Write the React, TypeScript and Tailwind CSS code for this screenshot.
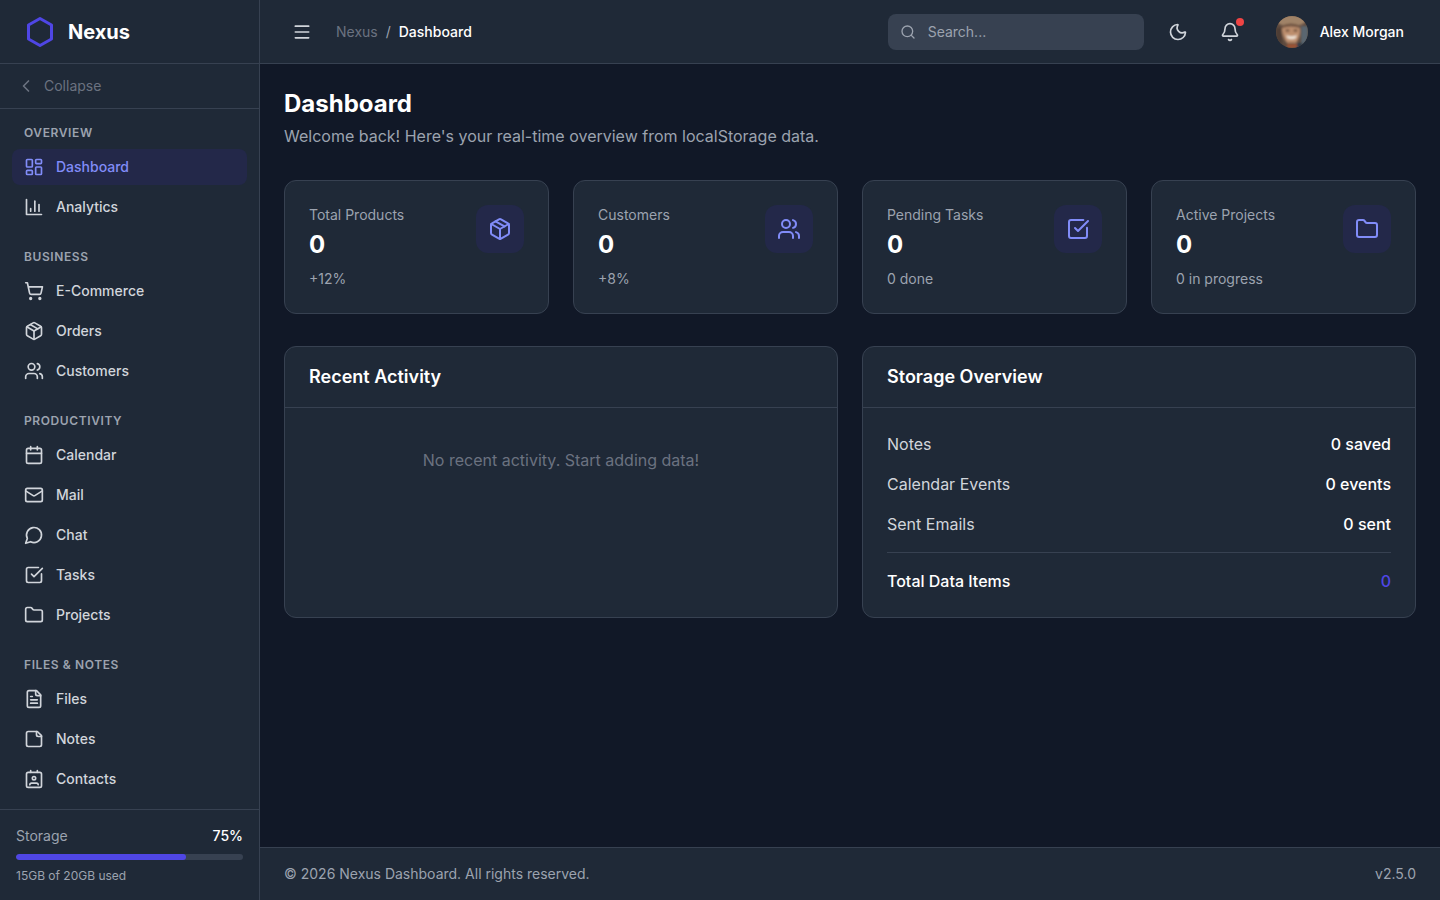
import React from "react";
import {
  ChevronLeft, LayoutDashboard, ShoppingCart, Package, Users, Calendar, Mail,
  SquareCheckBig, Folder, Menu, Search, Moon, Bell,
} from "lucide-react";

type IconP = { size?: number; className?: string };
type IconT = React.ComponentType<IconP>;

function Svg({ size = 20, className = "", children }: IconP & { children: React.ReactNode }) {
  return (
    <svg width={size} height={size} viewBox="0 0 24 24" fill="none" stroke="currentColor" strokeWidth={2} strokeLinecap="round" strokeLinejoin="round" className={className}>
      {children}
    </svg>
  );
}

const AnalyticsIcon: IconT = (p) => (
  <Svg {...p}>
    <path d="M3 3v18h18" />
    <path d="M18 17V9" />
    <path d="M13 17V5" />
    <path d="M8 17v-3" />
  </Svg>
);
const ChatIcon: IconT = (p) => (
  <Svg {...p}>
    <path d="M7.9 20A9 9 0 1 0 4 16.1L2 22Z" />
  </Svg>
);
const FileTextIcon: IconT = (p) => (
  <Svg {...p}>
    <path d="M15 2H6a2 2 0 0 0-2 2v16a2 2 0 0 0 2 2h12a2 2 0 0 0 2-2V7Z" />
    <path d="M14 2v4a2 2 0 0 0 2 2h4" />
    <path d="M10 9H8" />
    <path d="M16 13H8" />
    <path d="M16 17H8" />
  </Svg>
);
const NoteIcon: IconT = (p) => (
  <Svg {...p}>
    <path d="M16 3H5a2 2 0 0 0-2 2v14a2 2 0 0 0 2 2h14a2 2 0 0 0 2-2V8Z" />
    <path d="M15 3v4a2 2 0 0 0 2 2h4" />
  </Svg>
);
const ContactIcon: IconT = (p) => (
  <Svg {...p}>
    <path d="M16 2v2" />
    <path d="M8 2v2" />
    <rect x="3" y="4" width="18" height="18" rx="2" />
    <circle cx="12" cy="11" r="2" />
    <path d="M17 19a2 2 0 0 0-2-2H9a2 2 0 0 0-2 2" />
  </Svg>
);

const sections: { title: string; items: { label: string; icon: IconT; active?: boolean }[] }[] = [
  { title: "Overview", items: [{ label: "Dashboard", icon: LayoutDashboard, active: true }, { label: "Analytics", icon: AnalyticsIcon }] },
  { title: "Business", items: [{ label: "E-Commerce", icon: ShoppingCart }, { label: "Orders", icon: Package }, { label: "Customers", icon: Users }] },
  { title: "Productivity", items: [{ label: "Calendar", icon: Calendar }, { label: "Mail", icon: Mail }, { label: "Chat", icon: ChatIcon }, { label: "Tasks", icon: SquareCheckBig }, { label: "Projects", icon: Folder }] },
  { title: "Files & Notes", items: [{ label: "Files", icon: FileTextIcon }, { label: "Notes", icon: NoteIcon }, { label: "Contacts", icon: ContactIcon }] },
];

const stats: { label: string; sub: string; icon: IconT }[] = [
  { label: "Total Products", sub: "+12%", icon: Package },
  { label: "Customers", sub: "+8%", icon: Users },
  { label: "Pending Tasks", sub: "0 done", icon: SquareCheckBig },
  { label: "Active Projects", sub: "0 in progress", icon: Folder },
];

function Logo() {
  return (
    <svg width="32" height="32" viewBox="0 0 32 32" fill="none" className="shrink-0">
      <path d="M16 2.5 27.5 9v14L16 29.5 4.500 23V9z" stroke="#4f46e5" strokeWidth="3" strokeLinejoin="round" />
    </svg>
  );
}

function Avatar() {
  return (
    <svg width="32" height="32" viewBox="0 0 32 32" className="shrink-0 rounded-full">
      <defs>
        <filter id="soft" x="-10%" y="-10%" width="120%" height="120%">
          <feGaussianBlur stdDeviation="0.8" />
        </filter>
      </defs>
      <rect width="32" height="32" fill="#5e4a3e" />
      <g filter="url(#soft)">
        <rect x="25" y="10" width="7" height="22" fill="#5a6670" />
        <rect x="0" y="12" width="6" height="20" fill="#4d3c34" />
        <ellipse cx="15" cy="4.500" rx="15" ry="5.500" fill="#a08367" />
        <path d="M5 10q10-5 20 0l-1 2q-9-3-18 0z" fill="#6e5140" />
        <path d="M6 12q9-3 18 0q1 9-4 15h-9q-5-6-5-15z" fill="#bd8f6e" />
        <ellipse cx="11.500" cy="14.500" rx="2.200" ry="1" fill="#5f4232" />
        <ellipse cx="19.500" cy="14.500" rx="2.200" ry="1" fill="#5f4232" />
        <path d="M10 19q5.500 2.500 11 0l-1.500 3.500q-4 1.500-8 0z" fill="#efe4d8" />
        <rect x="11" y="28" width="10" height="4" fill="#9c5236" />
        <rect x="21" y="27" width="6" height="5" fill="#2f3d4b" />
      </g>
    </svg>
  );
}

function Row({ k, v }: { k: string; v: string }) {
  return (
    <div className="flex items-center justify-between">
      <span className="text-[#d1d5db]">{k}</span>
      <span className="font-medium text-white">{v}</span>
    </div>
  );
}

export default function App() {
  return (
    <div className="flex h-screen overflow-hidden bg-[#111827] font-['Inter',sans-serif] text-white">
      <aside className="flex w-[260px] shrink-0 flex-col border-r border-[#374151] bg-[#1f2937]">
        <div className="flex h-16 shrink-0 items-center gap-3 border-b border-[#374151] px-6">
          <Logo />
          <span className="text-xl font-bold text-white">Nexus</span>
        </div>
        <div className="flex shrink-0 items-center gap-2 border-b border-[#374151] px-4 py-3 text-sm text-[#6b7280]">
          <ChevronLeft size={20} />
          <span>Collapse</span>
        </div>
        <nav className="flex min-h-0 flex-1 flex-col gap-6 overflow-hidden px-3 py-4">
          {sections.map((s) => (
            <div key={s.title}>
              <div className="mb-2 px-3 text-xs font-semibold uppercase tracking-wider text-[#9ca3af]">{s.title}</div>
              <div className="flex flex-col gap-1">
                {s.items.map((it) => {
                  const I = it.icon;
                  return (
                    <div key={it.label} className={`flex h-9 items-center gap-3 rounded-lg px-3 text-sm font-medium ${it.active ? "bg-[#232849] text-[#818cf8]" : "text-[#d1d5db]"}`}>
                      <I size={20} />
                      <span>{it.label}</span>
                    </div>
                  );
                })}
              </div>
            </div>
          ))}
        </nav>
        <div className="shrink-0 border-t border-[#374151] p-4">
          <div className="mb-2 flex items-center justify-between text-sm">
            <span className="text-[#9ca3af]">Storage</span>
            <span className="font-medium text-white">75%</span>
          </div>
          <div className="h-1.5 overflow-hidden rounded-full bg-[#374151]">
            <div className="h-full w-3/4 rounded-full bg-[#4f46e5]" />
          </div>
          <div className="mt-2 text-xs text-[#9ca3af]">15GB of 20GB used</div>
        </div>
      </aside>

      <div className="flex min-w-0 flex-1 flex-col">
        <header className="flex h-16 shrink-0 items-center justify-between border-b border-[#374151] bg-[#1f2937] px-6">
          <div className="flex items-center gap-4">
            <div className="flex h-9 w-9 items-center justify-center text-[#d1d5db]"><Menu size={20} /></div>
            <div className="flex items-center gap-2 text-sm">
              <span className="text-[#6b7280]">Nexus</span>
              <span className="text-[#9ca3af]">/</span>
              <span className="font-medium text-white">Dashboard</span>
            </div>
          </div>
          <div className="flex items-center gap-4">
            <div className="flex h-9 w-64 items-center gap-3 rounded-lg bg-[#374151] pl-3 text-sm text-[#9ca3af]">
              <Search size={16} />
              <span>Search...</span>
            </div>
            <div className="flex h-9 w-9 items-center justify-center text-[#d1d5db]"><Moon size={20} /></div>
            <div className="relative flex h-9 w-9 items-center justify-center text-[#d1d5db]">
              <Bell size={20} />
              <span className="absolute right-1 top-1 h-2 w-2 rounded-full bg-[#ef4444]" />
            </div>
            <div className="flex items-center gap-3 p-1 px-3">
              <Avatar />
              <span className="text-sm font-medium text-white">Alex Morgan</span>
            </div>
          </div>
        </header>

        <main className="min-h-0 flex-1 overflow-hidden p-6">
          <h1 className="text-2xl font-bold text-white">Dashboard</h1>
          <p className="mt-1 text-[#9ca3af]">Welcome back! Here's your real-time overview from localStorage data.</p>

          <div className="mt-8 grid grid-cols-4 gap-6">
            {stats.map((s) => {
              const I = s.icon;
              return (
                <div key={s.label} className="flex items-start justify-between rounded-xl border border-[#374151] bg-[#1f2937] p-6">
                  <div>
                    <div className="text-sm text-[#9ca3af]">{s.label}</div>
                    <div className="mt-1 text-2xl font-bold text-white">0</div>
                    <div className="mt-2 text-sm text-[#9ca3af]">{s.sub}</div>
                  </div>
                  <div className="flex h-12 w-12 items-center justify-center rounded-xl bg-[#232849] text-[#818cf8]">
                    <I size={24} />
                  </div>
                </div>
              );
            })}
          </div>

          <div className="mt-8 grid grid-cols-2 gap-6">
            <div className="rounded-xl border border-[#374151] bg-[#1f2937]">
              <div className="border-b border-[#374151] px-6 py-4 text-lg font-semibold text-white">Recent Activity</div>
              <div className="p-6">
                <p className="py-4 text-center text-[#6b7280]">No recent activity. Start adding data!</p>
              </div>
            </div>
            <div className="rounded-xl border border-[#374151] bg-[#1f2937]">
              <div className="border-b border-[#374151] px-6 py-4 text-lg font-semibold text-white">Storage Overview</div>
              <div className="flex flex-col gap-4 p-6">
                <Row k="Notes" v="0 saved" />
                <Row k="Calendar Events" v="0 events" />
                <Row k="Sent Emails" v="0 sent" />
                <div className="flex items-center justify-between border-t border-[#374151] pt-4">
                  <span className="font-medium text-white">Total Data Items</span>
                  <span className="font-medium text-[#4f46e5]">0</span>
                </div>
              </div>
            </div>
          </div>
        </main>

        <footer className="flex shrink-0 items-center justify-between border-t border-[#374151] bg-[#1f2937] px-6 py-4 text-sm text-[#9ca3af]">
          <span>© 2026 Nexus Dashboard. All rights reserved.</span>
          <span>v2.5.0</span>
        </footer>
      </div>
    </div>
  );
}
